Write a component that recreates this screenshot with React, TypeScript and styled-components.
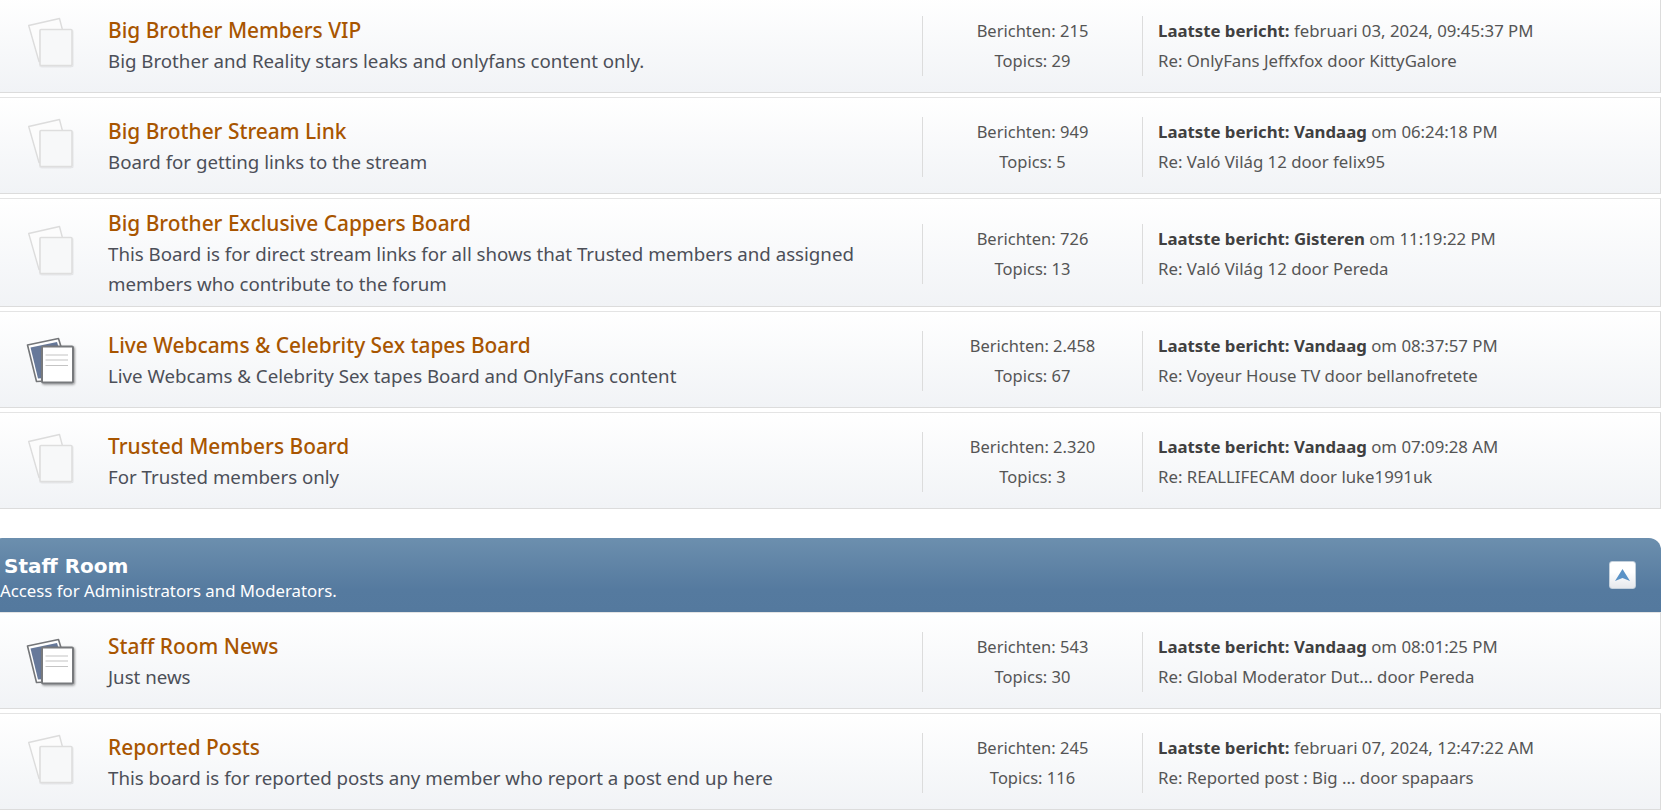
import styled, { createGlobalStyle } from "styled-components";

const GlobalStyle = createGlobalStyle`
    html, body {
        margin: 0;
        padding: 0;
        height: 810px;
        overflow: hidden;
        background: #fff;
        font-family: "Noto Sans", "Open Sans", sans-serif;
    }
`;

const Page = styled.div`
    width: 1671px;
    margin: -4px 0 0 -10px;
`;

const Row = styled.div`
    display: flex;
    align-items: center;
    box-sizing: border-box;
    min-height: 96.5px;
    padding: 8.75px 0 6.75px 29px;
    margin-bottom: 4.5px;
    background: linear-gradient(#fff, #f1f3f6);
    border: 1px solid #dcdcdc;
    border-top-color: #e4e4e4;
`;

const IconBox = styled.svg`
    width: 64px;
    height: 64px;
    flex: none;
    margin-right: 24px;
`;

const Info = styled.div`
    flex: 1;
    padding-right: 50px;
    min-width: 0;
`;

const Title = styled.a`
    display: block;
    font-size: 20.9px;
    line-height: 31px;
    font-weight: 500;
    color: #a85500;
    text-decoration: none;
`;

const Description = styled.p`
    margin: 0;
    font-size: 18.7px;
    line-height: 30px;
    color: #4c4f58;
`;

const Stats = styled.div`
    flex: none;
    box-sizing: border-box;
    width: 220px;
    margin-top: 2px;
    border-left: 1px solid #dcdcdc;
    text-align: center;
    font-size: 16.5px;
    line-height: 30px;
    color: #555;
`;

const LastPost = styled.div`
    flex: none;
    box-sizing: border-box;
    width: 518px;
    margin-top: 2px;
    padding-left: 15px;
    border-left: 1px solid #dcdcdc;
    font-size: 16.8px;
    line-height: 30px;
    color: #555;

    strong {
        font-weight: 700;
        color: #404040;
    }
`;

const SectionHeader = styled.div`
    display: flex;
    align-items: center;
    justify-content: space-between;
    box-sizing: border-box;
    height: 74px;
    margin-top: 29.5px;
    padding: 0 25px 0 10px;
    border-radius: 12px 12px 0 0;
    background: linear-gradient(#6c8fae 0%, #557a9f 70%, #54799e 100%);
    color: #fff;
`;

const SectionText = styled.div`
    padding-top: 6px;
`;

const SectionName = styled.div`
    padding-left: 4px;
    font-family: "DejaVu Sans", sans-serif;
    font-size: 20px;
    line-height: 26px;
    font-weight: 700;
`;

const SectionNote = styled.div`
    font-size: 16.8px;
    line-height: 24px;
`;

const Collapse = styled.button`
    display: flex;
    align-items: center;
    justify-content: center;
    width: 27px;
    height: 28px;
    padding: 0;
    border: 1px solid #c3d0dc;
    border-radius: 3px;
    background: linear-gradient(#fff 40%, #e6e8ec);
`;

function ActiveIcon() {
    return (
        <IconBox viewBox="0 0 64 64">
            <defs>
                <filter id="shadowOn" x="-20%" y="-20%" width="140%" height="140%">
                    <feDropShadow dx="1" dy="1.2" stdDeviation="0.8" floodColor="#000" floodOpacity="0.4" />
                </filter>
            </defs>
            <path
                d="M7.5 17 L38.5 10.5 L42 22 L26 53 L16.5 53.5 Z"
                fill="#fff"
                stroke="#747679"
                strokeWidth="1.6"
                strokeLinejoin="round"
            />
            <path d="M10.5 19.5 L37 14 L40 24 L24 50 L18 50.5 Z" fill="#67799a" />
            <rect x="22" y="18.5" width="31" height="36" rx="1" fill="#fff" stroke="#77797c" strokeWidth="2" filter="url(#shadowOn)" />
            <path d="M25.5 27 H48 M25.5 32 H48 M25.5 37.5 H48" stroke="#c4c4c4" strokeWidth="1.2" fill="none" />
        </IconBox>
    );
}

function IdleIcon() {
    return (
        <IconBox viewBox="0 0 64 64">
            <defs>
                <filter id="shadowOff" x="-20%" y="-20%" width="140%" height="140%">
                    <feDropShadow dx="0.4" dy="1" stdDeviation="0.7" floodColor="#000" floodOpacity="0.12" />
                </filter>
            </defs>
            <path
                d="M8.7 12.5 L39.5 5.5 L42.5 17 L26 47.5 L19 48.5 Z"
                fill="#fcfcfc"
                stroke="#dcdcdc"
                strokeWidth="1.4"
                strokeLinejoin="round"
            />
            <rect x="20" y="16.5" width="32" height="36" rx="1" fill="#f7f8f9" stroke="#dedede" strokeWidth="1.6" filter="url(#shadowOff)" />
        </IconBox>
    );
}

type Board = {
    title: string;
    description: string;
    active?: boolean;
    posts: string;
    topics: string;
    when: string;
    whenBold?: string;
    last: string;
};

const firstBoards: Board[] = [
    { title: "Big Brother Members VIP", description: "Big Brother and Reality stars leaks and onlyfans content only.", posts: "215", topics: "29", when: "februari 03, 2024, 09:45:37 PM", last: "Re: OnlyFans Jeffxfox door KittyGalore" },
    { title: "Big Brother Stream Link", description: "Board for getting links to the stream", posts: "949", topics: "5", whenBold: "Vandaag", when: "om 06:24:18 PM", last: "Re: Való Világ 12 door felix95" },
    { title: "Big Brother Exclusive Cappers Board", description: "This Board is for direct stream links for all shows that Trusted members and assigned members who contribute to the forum", posts: "726", topics: "13", whenBold: "Gisteren", when: "om 11:19:22 PM", last: "Re: Való Világ 12 door Pereda" },
    { title: "Live Webcams & Celebrity Sex tapes Board", description: "Live Webcams & Celebrity Sex tapes Board and OnlyFans content", active: true, posts: "2.458", topics: "67", whenBold: "Vandaag", when: "om 08:37:57 PM", last: "Re: Voyeur House TV door bellanofretete" },
    { title: "Trusted Members Board", description: "For Trusted members only", posts: "2.320", topics: "3", whenBold: "Vandaag", when: "om 07:09:28 AM", last: "Re: REALLIFECAM door luke1991uk" },
];

const staffBoards: Board[] = [
    { title: "Staff Room News", description: "Just news", active: true, posts: "543", topics: "30", whenBold: "Vandaag", when: "om 08:01:25 PM", last: "Re: Global Moderator Dut... door Pereda" },
    { title: "Reported Posts", description: "This board is for reported posts any member who report a post end up here", posts: "245", topics: "116", when: "februari 07, 2024, 12:47:22 AM", last: "Re: Reported post : Big ... door spapaars" },
];

function BoardRow({ board }: { board: Board }) {
    return (
        <Row>
            {board.active ? <ActiveIcon /> : <IdleIcon />}
            <Info>
                <Title href="#">{board.title}</Title>
                <Description>{board.description}</Description>
            </Info>
            <Stats>
                <div>Berichten: {board.posts}</div>
                <div>Topics: {board.topics}</div>
            </Stats>
            <LastPost>
                <div>
                    <strong>Laatste bericht:{board.whenBold ? ` ${board.whenBold}` : ""}</strong> {board.when}
                </div>
                <div>{board.last}</div>
            </LastPost>
        </Row>
    );
}

export default function App() {
    return (
        <Page>
            <GlobalStyle />
            {firstBoards.map((b) => (
                <BoardRow key={b.title} board={b} />
            ))}
            <SectionHeader>
                <SectionText>
                    <SectionName>Staff Room</SectionName>
                    <SectionNote>Access for Administrators and Moderators.</SectionNote>
                </SectionText>
                <Collapse aria-label="collapse">
                    <svg width="15" height="12" viewBox="0 0 15 12">
                        <path d="M7.5 0 L15 12 L7.5 9 L0 12 Z" fill="#5b93c7" />
                    </svg>
                </Collapse>
            </SectionHeader>
            {staffBoards.map((b) => (
                <BoardRow key={b.title} board={b} />
            ))}
        </Page>
    );
}
